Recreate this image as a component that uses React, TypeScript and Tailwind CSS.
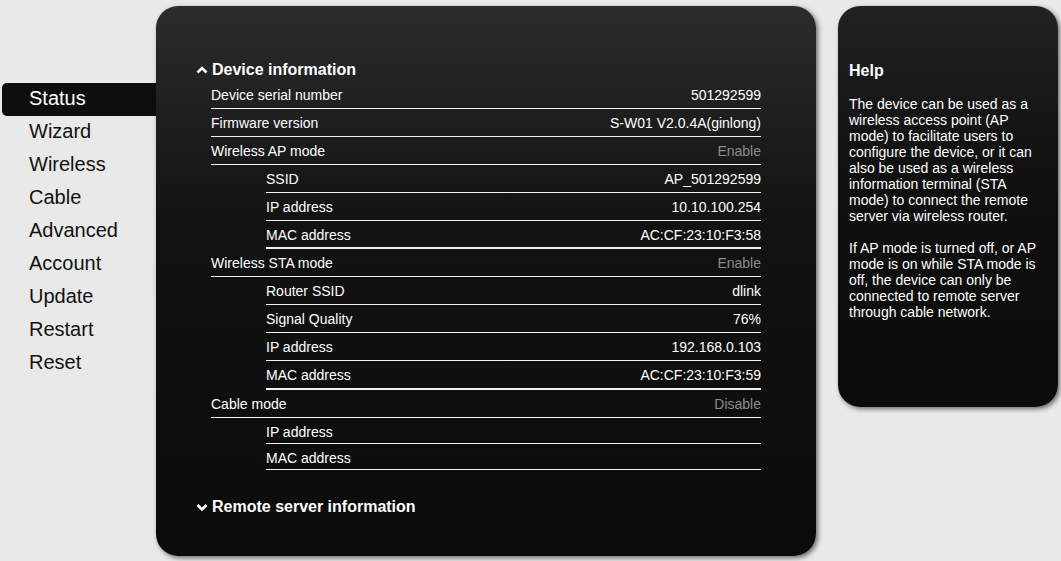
import React from "react";

const menu = ["Status", "Wizard", "Wireless", "Cable", "Advanced", "Account", "Update", "Restart", "Reset"];

type Row = { label: string; value?: string; sub?: boolean; dim?: boolean; h: string; thick?: boolean };

const rows: Row[] = [
  { label: "Device serial number", value: "501292599", h: "h-[28px]" },
  { label: "Firmware version", value: "S-W01 V2.0.4A(ginlong)", h: "h-[28px]" },
  { label: "Wireless AP mode", value: "Enable", dim: true, h: "h-[28px]" },
  { label: "SSID", value: "AP_501292599", sub: true, h: "h-[28px]" },
  { label: "IP address", value: "10.10.100.254", sub: true, h: "h-[28px]" },
  { label: "MAC address", value: "AC:CF:23:10:F3:58", sub: true, thick: true, h: "h-[28px]" },
  { label: "Wireless STA mode", value: "Enable", dim: true, h: "h-[28px]" },
  { label: "Router SSID", value: "dlink", sub: true, h: "h-[28px]" },
  { label: "Signal Quality", value: "76%", sub: true, h: "h-[28px]" },
  { label: "IP address", value: "192.168.0.103", sub: true, h: "h-[28px]" },
  { label: "MAC address", value: "AC:CF:23:10:F3:59", sub: true, thick: true, h: "h-[29px]" },
  { label: "Cable mode", value: "Disable", dim: true, h: "h-[28px]" },
  { label: "IP address", sub: true, h: "h-[26px]" },
  { label: "MAC address", sub: true, h: "h-[26px]" },
];

const Chevron = ({ up }: { up?: boolean }) => (
  <svg width="12" height="10" viewBox="0 0 12 10" className="mr-[4px]">
    <polyline
      points={up ? "1.5,7.5 6,3 10.5,7.5" : "1.5,3 6,7.5 10.5,3"}
      fill="none"
      stroke="white"
      strokeWidth="2.6"
    />
  </svg>
);

const InfoRow = ({ row }: { row: Row }) => (
  <div
    className={`flex justify-between leading-4 pt-[6px] ${row.h} ${
      row.thick ? "border-b-2" : "border-b"
    } border-[#f2f2f2] ${row.sub ? "ml-[55px]" : ""}`}
  >
    <span className="text-white">{row.label}</span>
    <span className={row.dim ? "text-[#8c8c8c]" : "text-white"}>{row.value}</span>
  </div>
);

export default function App() {
  return (
    <div
      className="w-[1061px] h-[561px] bg-[#e9e9e9] flex overflow-hidden"
      style={{ fontFamily: '"Liberation Sans", Arial, sans-serif' }}
    >
      <nav className="w-[156px] pt-[83px] pl-[2px] flex flex-col shrink-0">
        {menu.map((m, i) => (
          <div
            key={m}
            className={`h-[33px] flex items-center pl-[27px] pb-[4px] text-[20px] ${
              i === 0 ? "bg-[#0e0e0e] text-white rounded-l-[5px]" : "text-[#111]"
            }`}
          >
            {m}
          </div>
        ))}
      </nav>

      <main className="mt-[6px] w-[660px] h-[550px] shrink-0 rounded-[22px] bg-gradient-to-b from-[#2c2c2c] via-[#121212] via-40% to-[#0b0b0b] shadow-[2px_2px_5px_rgba(0,0,0,0.55)] pl-[40px] pr-[55px] pt-[54px] text-[14px]">
        <h2 className="flex items-center h-[20px] text-white font-bold text-[16px]">
          <Chevron up />
          Device information
        </h2>
        <div className="ml-[15px] mt-[1px]">
          {rows.map((r, i) => (
            <InfoRow key={i} row={r} />
          ))}
        </div>
        <h2 className="flex items-center h-[20px] mt-[27px] text-white font-bold text-[16px]">
          <Chevron />
          Remote server information
        </h2>
      </main>

      <aside className="ml-[22px] mt-[6px] w-[220px] h-[401px] shrink-0 rounded-[22px] bg-gradient-to-b from-[#222] via-[#111] via-40% to-[#0b0b0b] shadow-[2px_2px_5px_rgba(0,0,0,0.55)] pl-[11px] pt-[55px] text-white">
        <h3 className="font-bold text-[16px] leading-5">Help</h3>
        <div className="mt-[15px] w-[200px] text-[14px] leading-4">
          <p>
            The device can be used as a wireless access point (AP mode) to facilitate users to configure the device, or it
            can also be used as a wireless information terminal (STA mode) to connect the remote server via wireless router.
          </p>
          <p className="mt-4">
            If AP mode is turned off, or AP mode is on while STA mode is off, the device can only be connected to remote
            server through cable network.
          </p>
        </div>
      </aside>
    </div>
  );
}
